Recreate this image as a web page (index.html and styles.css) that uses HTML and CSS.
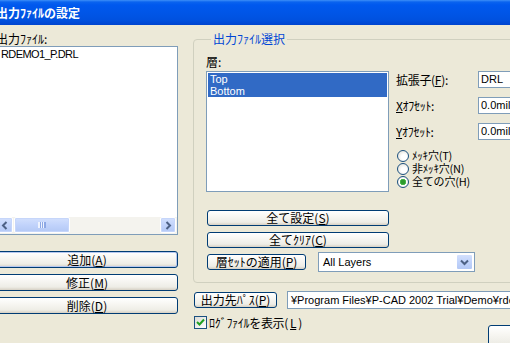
FILE: index.html
```html
<!DOCTYPE html>
<html lang="ja">
<head>
    <meta charset="UTF-8">
    <title>出力ファイルの設定</title>
    <link rel="stylesheet" href="styles.css">
</head>
<body>

    <div class="window">
        <div class="titlebar">出力ﾌｧｲﾙの設定</div>

        <div class="client">
            <!-- output file list -->
            <div class="left">
                <div class="label">出力ﾌｧｲﾙ:</div>
                <div class="filelist">
                    <div class="items">
                        <div class="item">RDEMO1_P.DRL</div>
                    </div>
                    <div class="hscroll">
                        <span class="sbtn">
                            <svg width="8" height="9" viewBox="0 0 8 9"><path d="M5.5 1 L2 4.5 L5.5 8" fill="none" stroke="#4d6185" stroke-width="2"/></svg>
                        </span>
                        <span class="thumb"><i></i></span>
                        <span class="track"></span>
                        <span class="sbtn">
                            <svg width="8" height="9" viewBox="0 0 8 9"><path d="M2.5 1 L6 4.5 L2.5 8" fill="none" stroke="#4d6185" stroke-width="2"/></svg>
                        </span>
                    </div>
                </div>
                <div class="btncol">
                    <button class="btn default">追加(<u>A</u>)</button>
                    <button class="btn">修正(<u>M</u>)</button>
                    <button class="btn">削除(<u>D</u>)</button>
                </div>
            </div>

            <div class="right">
                <fieldset class="group">
                    <legend>出力ﾌｧｲﾙ選択</legend>
                    <div class="grouptop">
                        <div class="layers">
                            <div class="label">層:</div>
                            <div class="layerlist">
                                <div class="sel">Top</div>
                                <div class="sel">Bottom</div>
                            </div>
                        </div>
                        <div class="fields">
                            <div class="field">
                                <span class="flabel">拡張子(<u>F</u>):</span>
                                <div class="edit short">DRL</div>
                            </div>
                            <div class="field">
                                <span class="flabel"><u>X</u>ｵﾌｾｯﾄ:</span>
                                <div class="edit short">0.0mil</div>
                            </div>
                            <div class="field">
                                <span class="flabel"><u>Y</u>ｵﾌｾｯﾄ:</span>
                                <div class="edit short">0.0mil</div>
                            </div>
                            <div class="radios">
                                <div class="radio"><span class="dot"></span>ﾒｯｷ穴(T)</div>
                                <div class="radio"><span class="dot"></span>非ﾒｯｷ穴(N)</div>
                                <div class="radio on"><span class="dot"></span>全ての穴(H)</div>
                            </div>
                        </div>
                    </div>
                    <div class="groupbtns">
                        <button class="btn wide">全て設定(<u>S</u>)</button>
                        <button class="btn wide">全てｸﾘｱ(<u>C</u>)</button>
                        <div class="setrow">
                            <button class="btn setbtn">層ｾｯﾄの適用(<u>P</u>)</button>
                            <div class="combo">
                                <span class="ctext">All Layers</span>
                                <span class="drop">
                                    <svg width="9" height="7" viewBox="0 0 9 7"><path d="M1 1.5 L4.5 5 L8 1.5" fill="none" stroke="#4d6185" stroke-width="2"/></svg>
                                </span>
                            </div>
                        </div>
                    </div>
                </fieldset>

                <div class="pathrow">
                    <button class="btn pathbtn">出力先ﾊﾟｽ(<u>P</u>)</button>
                    <div class="edit path">¥Program Files¥P-CAD 2002 Trial¥Demo¥rdemo</div>
                </div>

                <div class="bottomrow">
                    <div class="check">
                        <span class="box">
                            <svg width="9" height="9" viewBox="0 0 9 9"><path d="M1 4 L3.5 6.5 L8 1.5" fill="none" stroke="#21a121" stroke-width="2"/></svg>
                        </span>
                        ﾛｸﾞﾌｧｲﾙを表示(<u>L</u>)
                    </div>
                    <button class="btn okbtn"></button>
                </div>
            </div>
        </div>
    </div>

</body>
</html>
```

FILE: styles.css
```css
* {
    margin: 0;
    padding: 0;
    box-sizing: border-box;
}

body {
    background-color: #ece9d8;
    color: #000;
    font-family: "Noto Sans CJK JP", sans-serif;
    font-size: 12px;
    overflow: hidden;
}

u {
    text-decoration: underline;
    text-underline-offset: 1px;
}

.window {
    width: 580px;
    margin-left: -8px;
}

/* Title bar */
.titlebar {
    height: 25px;
    padding-left: 4px;
    background: linear-gradient(#3d8ff8 0, #0a63ef 2px, #0058ee 5px, #0055e6 14px, #0051df 20px, #0044cf 25px);
    color: #fff;
    font-weight: bold;
    line-height: 25px;
}

.client {
    display: flex;
    padding: 7px 0 0 4px;
}

.label {
    height: 14px;
    line-height: 14px;
}

/* Left column */
.left {
    width: 182px;
    flex: none;
}

.filelist {
    height: 189px;
    border: 1px solid #7f9db9;
    background: #fff;
    display: flex;
    flex-direction: column;
}

.items {
    flex: 1;
    padding: 1px 0 0 4px;
}

.item {
    font-family: "Liberation Sans", sans-serif;
    font-size: 11px;
    line-height: 13px;
    letter-spacing: -0.6px;
}

.hscroll {
    height: 17px;
    display: flex;
    background: #f4f3ee;
    padding: 0 1px 1px 0;
}

.sbtn,
.thumb {
    display: flex;
    align-items: center;
    justify-content: center;
    border: 1px solid #fff;
    border-radius: 2px;
    background: linear-gradient(#d3e0fd, #c1d3fb 50%, #b3c8f5);
    box-shadow: inset 0 0 0 1px #c6d6fa;
}

.sbtn {
    width: 16px;
}

.thumb {
    width: 56px;
    margin-left: 1px;
}

.thumb i {
    width: 8px;
    height: 6px;
    border-left: 1px solid #eef3fe;
    border-right: 1px solid #8da8e5;
    background: repeating-linear-gradient(to right, #eef3fe 0 1px, #8da8e5 1px 2px);
}

.track {
    flex: 1;
}

.btncol {
    display: flex;
    flex-direction: column;
    gap: 6px;
    margin-top: 16px;
}

/* Buttons */
.btn {
    display: block;
    height: 17px;
    border: 1px solid #003c74;
    border-radius: 3px;
    background: linear-gradient(#fff, #f7f6f2 40%, #eeede6 80%, #d6d0c4);
    font: inherit;
    line-height: 14px;
    text-align: center;
    color: #000;
}

.btn.default {
    box-shadow: inset 0 0 0 1px #b6c8ef;
}

/* Right column */
.right {
    width: 370px;
    flex: none;
    margin: 0 0 0 15px;
}

.group {
    border: 1px solid #d0d0bf;
    border-radius: 4px;
    padding: 9px 0 12px 12px;
}

.group legend {
    margin-left: 5px;
    padding: 0 2px;
    color: #0046d5;
    line-height: 14px;
}

.grouptop {
    display: flex;
    gap: 7px;
}

.layers {
    width: 183px;
}

.layerlist {
    height: 121px;
    margin-top: 2px;
    border: 1px solid #7f9db9;
    background: #fff;
    padding: 1px;
}

.layerlist .sel {
    background: #316ac5;
    color: #fff;
    font-family: "Liberation Sans", sans-serif;
    font-size: 11px;
    line-height: 12px;
    padding-left: 2px;
}

.fields {
    padding-top: 16px;
}

.field {
    display: flex;
    align-items: center;
    height: 17px;
    margin-bottom: 9px;
}

.flabel {
    width: 82px;
    line-height: 14px;
    letter-spacing: -0.3px;
}

.edit {
    height: 17px;
    border: 1px solid #7f9db9;
    background: #fff;
    font-family: "Liberation Sans", sans-serif;
    font-size: 11px;
    line-height: 15px;
    padding-left: 2px;
    white-space: nowrap;
    overflow: hidden;
}

.edit.short {
    width: 70px;
}

.radios {
    margin-top: 5px;
}

.radio {
    display: flex;
    align-items: center;
    gap: 3px;
    height: 13px;
    line-height: 13px;
    font-size: 11px;
    padding-left: 1px;
    letter-spacing: -0.2px;
}

.radio .dot {
    width: 12px;
    height: 12px;
    flex: none;
    border: 1px solid #1c5180;
    border-radius: 50%;
    background: radial-gradient(circle at 60% 60%, #fff 30%, #dcd9cd);
}

.radio.on .dot {
    background: radial-gradient(circle, #2d9a2d 0 2px, #5cc45c 3px, #fff 3.5px 40%, #dcd9cd);
}

.groupbtns {
    margin-top: 18px;
    padding-left: 1px;
    display: flex;
    flex-direction: column;
    gap: 6px;
}

.btn.wide {
    width: 182px;
    height: 16px;
}

.setrow {
    display: flex;
    align-items: center;
    gap: 12px;
    height: 16px;
}

.btn.setbtn {
    width: 99px;
    height: 16px;
}

.combo {
    width: 157px;
    height: 20px;
    border: 1px solid #7f9db9;
    background: #fff;
    display: flex;
    align-items: center;
    padding: 1px;
}

.ctext {
    flex: 1;
    padding-left: 3px;
    font-family: "Liberation Sans", sans-serif;
    font-size: 11px;
}

.drop {
    width: 17px;
    height: 16px;
    display: flex;
    align-items: center;
    justify-content: center;
    border: 1px solid #fff;
    border-radius: 2px;
    background: linear-gradient(#d3e0fd, #c1d3fb 50%, #b3c8f5);
}

.pathrow {
    display: flex;
    align-items: center;
    gap: 10px;
    margin-top: 8px;
    padding-left: 1px;
}

.btn.pathbtn {
    width: 83px;
    height: 16px;
    flex: none;
}

.edit.path {
    flex: 1;
    height: 18px;
    padding-left: 3px;
    line-height: 16px;
}

.bottomrow {
    display: flex;
    align-items: flex-start;
    margin-top: 7px;
    padding-left: 1px;
}

.check {
    display: flex;
    align-items: center;
    gap: 2px;
    height: 13px;
    line-height: 13px;
    letter-spacing: -0.3px;
}

.check .box {
    width: 13px;
    height: 13px;
    border: 1px solid #1c5180;
    background: linear-gradient(135deg, #dcdbd5, #fff);
    display: flex;
    align-items: center;
    justify-content: center;
}

.btn.okbtn {
    width: 75px;
    height: 23px;
    margin: 9px 0 0 auto;
}
```
